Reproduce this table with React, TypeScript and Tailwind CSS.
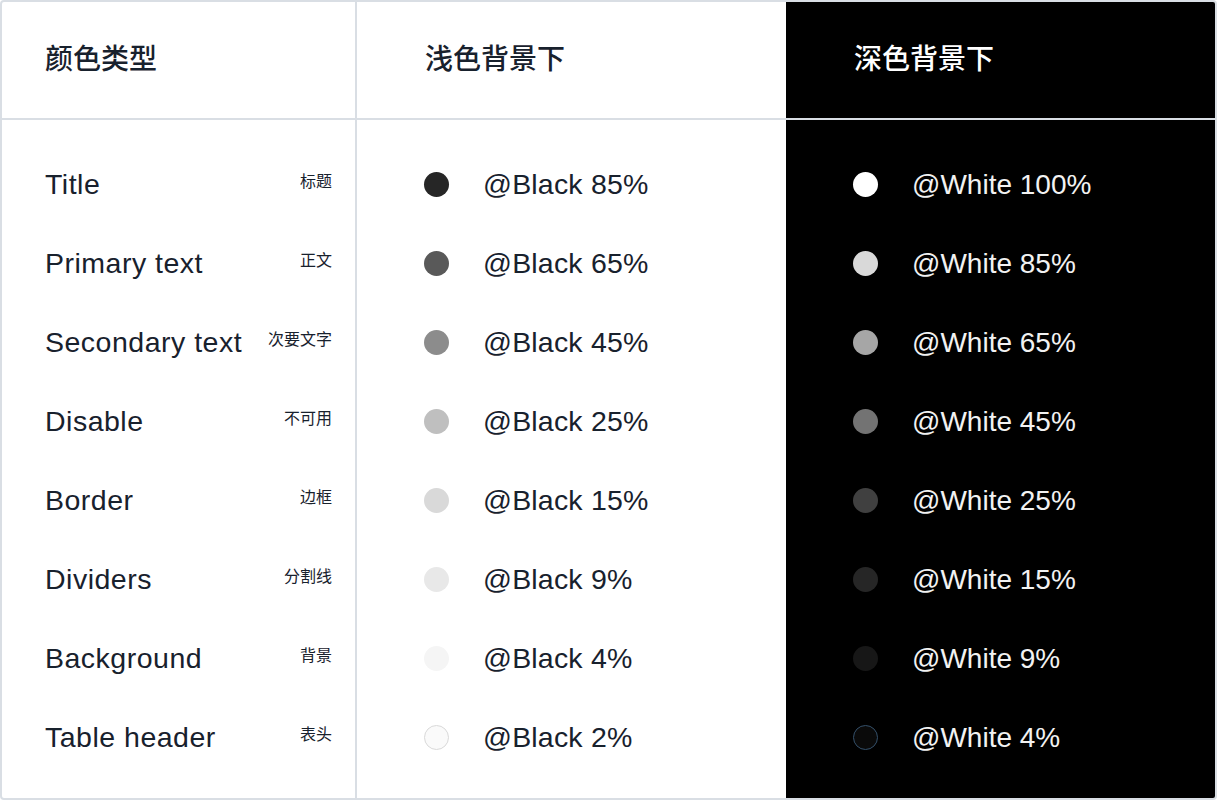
const rows = [
  { name: "Title", zh: "标题", light: "@Black 85%", lightDot: "bg-[#262626]", dark: "@White 100%", darkDot: "bg-[#ffffff]" },
  { name: "Primary text", zh: "正文", light: "@Black 65%", lightDot: "bg-[#595959]", dark: "@White 85%", darkDot: "bg-[#d9d9d9]" },
  { name: "Secondary text", zh: "次要文字", light: "@Black 45%", lightDot: "bg-[#8c8c8c]", dark: "@White 65%", darkDot: "bg-[#a6a6a6]" },
  { name: "Disable", zh: "不可用", light: "@Black 25%", lightDot: "bg-[#bfbfbf]", dark: "@White 45%", darkDot: "bg-[#737373]" },
  { name: "Border", zh: "边框", light: "@Black 15%", lightDot: "bg-[#d9d9d9]", dark: "@White 25%", darkDot: "bg-[#404040]" },
  { name: "Dividers", zh: "分割线", light: "@Black 9%", lightDot: "bg-[#e8e8e8]", dark: "@White 15%", darkDot: "bg-[#262626]" },
  { name: "Background", zh: "背景", light: "@Black 4%", lightDot: "bg-[#f5f5f5]", dark: "@White 9%", darkDot: "bg-[#171717]" },
  { name: "Table header", zh: "表头", light: "@Black 2%", lightDot: "bg-[#fafafa] border border-[#d9d9d9]", dark: "@White 4%", darkDot: "bg-[#0a0a0a] border border-[#34506a]" },
];

const font = "font-['Liberation_Sans','Noto_Sans_CJK_SC',sans-serif]";

export default function App() {
  return (
    <div className={`w-[1217px] h-[800px] bg-white ${font}`}>
      <div className="flex h-full border-2 border-[#d9dee4] rounded-[4px] overflow-hidden">
        {/* 颜色类型 */}
        <div className="w-[355px] flex flex-col border-r-2 border-[#d9dee4]">
          <div className="h-[118px] shrink-0 flex items-center pl-[43px] border-b-2 border-[#d9dee4]">
            <span className="text-[28px] font-medium text-[#18212d]">颜色类型</span>
          </div>
          <div className="pt-[25px] pl-[43px] pr-[23px]">
            {rows.map((r) => (
              <div key={r.name} className="h-[79px] flex items-center justify-between">
                <span className="text-[28.5px] tracking-[0.5px] text-[#18212d]">{r.name}</span>
                <span className="text-[16px] text-[#18212d] mb-[6px]">{r.zh}</span>
              </div>
            ))}
          </div>
        </div>

        {/* 浅色背景下 */}
        <div className="w-[429px] flex flex-col">
          <div className="h-[118px] shrink-0 flex items-center pl-[68px] border-b-2 border-[#d9dee4]">
            <span className="text-[28px] font-medium text-[#18212d]">浅色背景下</span>
          </div>
          <div className="pt-[25px] pl-[67px]">
            {rows.map((r) => (
              <div key={r.light} className="h-[79px] flex items-center gap-[34px]">
                <span className={`w-[25px] h-[25px] rounded-full ${r.lightDot}`} />
                <span className="text-[28.5px] tracking-[0.2px] text-[#18212d]">{r.light}</span>
              </div>
            ))}
          </div>
        </div>

        {/* 深色背景下 */}
        <div className="flex-1 flex flex-col bg-black">
          <div className="h-[118px] shrink-0 flex items-center pl-[68px] border-b-2 border-[#d9dee4]">
            <span className="text-[28px] font-medium text-white">深色背景下</span>
          </div>
          <div className="pt-[25px] pl-[67px]">
            {rows.map((r) => (
              <div key={r.dark} className="h-[79px] flex items-center gap-[34px]">
                <span className={`w-[25px] h-[25px] rounded-full ${r.darkDot}`} />
                <span className="text-[28px] text-[#f2f2f2]">{r.dark}</span>
              </div>
            ))}
          </div>
        </div>
      </div>
    </div>
  );
}
